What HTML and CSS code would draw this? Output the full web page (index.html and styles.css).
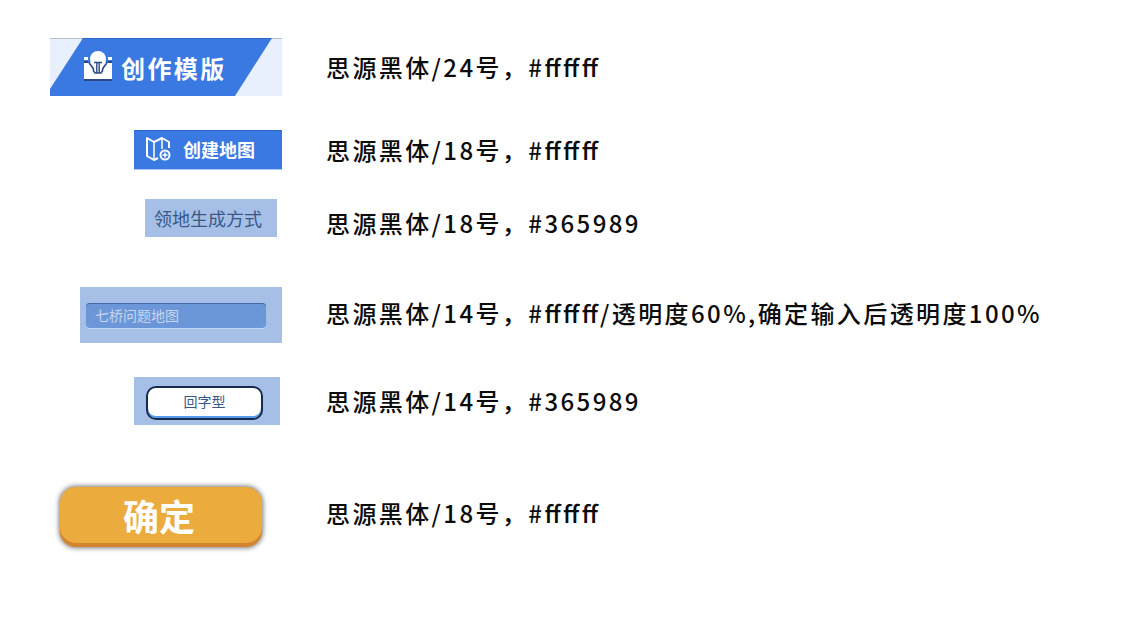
FILE: index.html
```html
<!DOCTYPE html>
<html lang="zh-CN">
<head>
<meta charset="utf-8">
<title>字体规范</title>
<link rel="stylesheet" href="styles.css">
</head>
<body>
<main class="specs">
  <section class="row">
    <div class="sample">
      <div class="banner">
        <svg class="banner-shape" viewBox="0 0 232 58" preserveAspectRatio="none" aria-hidden="true">
          <path fill="#e8f0fe" d="M0 0H232V58H0Z"/>
          <path fill="#b9bfc9" d="M0 0H232V1H0Z"/>
          <path fill="#3a79e1" d="M33 0H222L185 58H0V51Z"/>
          <path fill="#2f67c4" d="M33 0H222L221 1H32Z"/>
        </svg>
        <button class="banner-button" type="button">
          <svg class="bulb" viewBox="0 0 28 32" aria-hidden="true">
            <path fill="#fff" d="M0 6H4V9H0ZM24 6H28V9H24ZM0 12H28V28H0Z"/>
            <path fill="#2b4a86" d="M0 10H5V12H0ZM23 10H28V12H23ZM0 28H28V30H0Z"/>
            <path fill="#3a79e1" d="M4 6H24V12H4Z"/>
            <path fill="#fff" stroke="#2b4a86" stroke-width="1.600" d="M5 11C6 15 9 15 9.500 19V20L11 22H17L18.500 20V19C19 15 22 15 23 11"/>
            <circle cx="14" cy="8" r="8" fill="#fff"/>
            <path fill="#fff" d="M7 11H21L18 16H10Z"/>
            <path fill="none" stroke="#2b4a86" stroke-width="1.400" d="M10 11.500H18M12.800 11.500V22M15.200 11.500V22"/>
          </svg>
          <span>创作模版</span>
        </button>
      </div>
    </div>
    <p class="note">思源黑体/24号，#ffffff</p>
  </section>

  <section class="row row-create">
    <div class="sample">
      <button class="create" type="button">
        <svg class="map" viewBox="0 0 26 26" fill="none" stroke="#fff" stroke-width="2" stroke-linejoin="round" aria-hidden="true">
          <path d="M12 22L8 24L1 20V2L8 6L16 2L23 6V12"/>
          <path stroke-width="1.500" d="M8 6V24M16 2V13"/>
          <circle cx="19" cy="19" r="4.500"/>
          <path stroke-width="1.500" d="M19 16.500V21.500M16.500 19H21.500"/>
        </svg>
        <span>创建地图</span>
      </button>
    </div>
    <p class="note">思源黑体/18号，#ffffff</p>
  </section>

  <section class="row row-label">
    <div class="sample">
      <label class="field-label" for="map-name">领地生成方式</label>
    </div>
    <p class="note">思源黑体/18号，#365989</p>
  </section>

  <section class="row row-input">
    <div class="sample">
      <div class="input-panel"><input class="name-input" id="map-name" type="text" placeholder="七桥问题地图"></div>
    </div>
    <p class="note">思源黑体/14号，#ffffff/透明度60%,确定输入后透明度100%</p>
  </section>

  <section class="row row-option">
    <div class="sample">
      <div class="option-panel"><button class="option" type="button">回字型</button></div>
    </div>
    <p class="note">思源黑体/14号，#365989</p>
  </section>

  <section class="row row-confirm">
    <div class="sample">
      <button class="confirm" type="button">确定</button>
    </div>
    <p class="note">思源黑体/18号，#ffffff</p>
  </section>
</main>
</body>
</html>
```
FILE: styles.css
```css
* {
  box-sizing: border-box;
}

body,
button,
input {
  margin: 0;
  font-family: "Noto Sans CJK SC", sans-serif;
}

body {
  background: #fff;
  color: #0c0c0c;
}

button {
  border: 0;
  padding: 0;
  cursor: pointer;
}

.specs {
  display: flex;
  flex-direction: column;
  padding: 38px 50px;
}

.row {
  display: grid;
  grid-template-columns: 232px 1fr;
  column-gap: 44px;
  align-items: center;
}

.sample {
  display: flex;
  justify-content: flex-end;
}

.note {
  margin: 0;
  font-size: 24px;
  font-weight: 500;
  line-height: 36px;
  letter-spacing: 0.1em;
  font-feature-settings: "liga" 1;
}

.banner {
  display: grid;
  width: 100%;
  height: 58px;
}

.banner-shape,
.banner-button {
  grid-area: 1 / 1;
  width: 100%;
  height: 58px;
}

.banner-button {
  display: flex;
  align-items: center;
  gap: 9px;
  padding-left: 34px;
  background: none;
  color: #fff;
  font-size: 24px;
  font-weight: 700;
  letter-spacing: 0.1em;
  z-index: 1;
}

.bulb {
  width: 28px;
  height: 32px;
}

.row-create {
  margin-top: 34px;
}

.create {
  display: flex;
  align-items: center;
  gap: 11px;
  width: 148px;
  height: 40px;
  padding: 0 0 2px 12px;
  background: #3a79e1;
  border-top: 1px solid #2b66c4;
  border-bottom: 1px solid #a9c4f2;
  color: #fff;
  font-size: 18px;
  font-weight: 700;
}

.map {
  width: 26px;
  height: 26px;
}

.row-label {
  height: 48px;
  margin-top: 29px;
}

.row-label .sample {
  align-self: start;
  padding-right: 5px;
}

.field-label {
  padding: 0 15px 0 9px;
  background: #a6bfe6;
  color: #365989;
  font-size: 18px;
  line-height: 38px;
}

.row-input {
  margin-top: 40px;
}

.row-input .note {
  padding-bottom: 4px;
}

.input-panel {
  width: 202px;
  padding: 16px 16px 15px 6px;
  background: #a6bfe6;
}

.name-input {
  display: block;
  width: 100%;
  height: 25px;
  padding: 0 9px 2px;
  border: 0;
  border-radius: 4px;
  background: #6b96d8;
  box-shadow: inset 0 1px 0 #426ba5, 0 1px 0 #c0d4f5;
  color: #fff;
  font-size: 14px;
}

.name-input::placeholder {
  color: #fff;
  opacity: 0.6;
}

.row-option {
  margin-top: 34px;
}

.row-option .sample {
  padding-right: 2px;
}

.option-panel {
  width: 146px;
  padding: 9px 17px 5px 12px;
  background: #a6bfe6;
}

.option {
  display: block;
  width: 100%;
  height: 34px;
  padding-bottom: 4px;
  border: 2px solid #172a50;
  border-radius: 10px;
  background: #fff;
  box-shadow: inset 0 -2px 0 #559bed;
  color: #365989;
  font-size: 14px;
}

.row-confirm {
  margin-top: 62px;
}

.row-confirm .sample {
  padding-right: 20px;
}

.row-confirm .note {
  padding-bottom: 8px;
}

.confirm {
  width: 202px;
  height: 60px;
  padding: 0 4px 4px 0;
  border-radius: 16px;
  background: #ebab3d;
  box-shadow: inset 0 -4px 0 #d38431, 0 0 5px 1px #777;
  color: #fff;
  font-size: 36px;
  font-weight: 700;
}
```
